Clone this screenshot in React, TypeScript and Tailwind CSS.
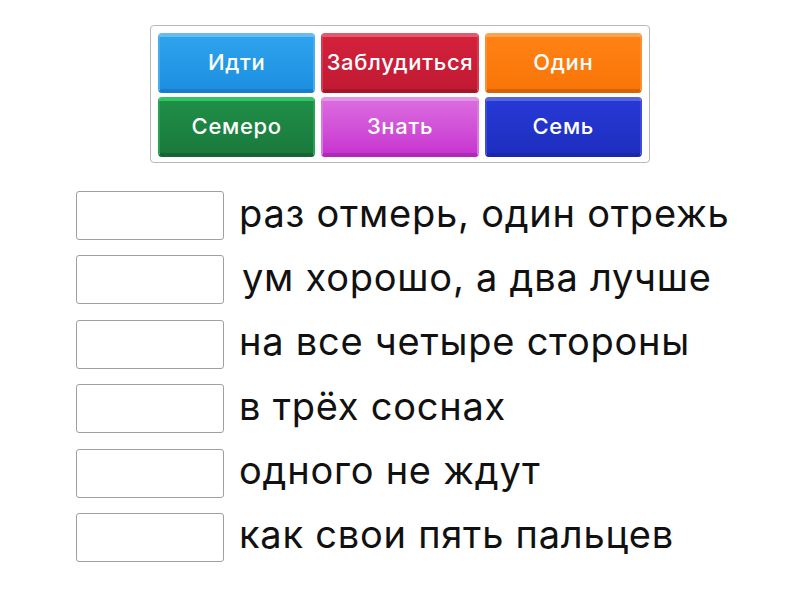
import React from "react";

const tiles = [
  { label: "Идти", face: "bg-gradient-to-b from-[#2ea3ec] to-[#1c8fe0]", edge: "border-t-[#66bcf2] border-x-[#46aeee] border-b-[#187ec9]" },
  { label: "Заблудиться", face: "bg-gradient-to-b from-[#d4213c] to-[#c21a33]", edge: "border-t-[#e05a6c] border-x-[#d83b50] border-b-[#a5162b]" },
  { label: "Один", face: "bg-gradient-to-b from-[#ff8114] to-[#f87607]", edge: "border-t-[#ffa24f] border-x-[#ff8f2e] border-b-[#d86307]" },
  { label: "Семеро", face: "bg-gradient-to-b from-[#1f8e47] to-[#1a7a3d]", edge: "border-t-[#2fc763] border-x-[#25a352] border-b-[#156633]" },
  { label: "Знать", face: "bg-gradient-to-b from-[#da6bde] to-[#c834d1]", edge: "border-t-[#e494e8] border-x-[#d97adf] border-b-[#b02ab9]" },
  { label: "Семь", face: "bg-gradient-to-b from-[#2639d5] to-[#1e2ebf]", edge: "border-t-[#5565e2] border-x-[#3b4cdb] border-b-[#1a27a6]" },
];

const phrases = [
  { text: "раз отмерь, один отрежь", pad: "pl-0" },
  { text: "ум хорошо, а два лучше", pad: "pl-[3px]" },
  { text: "на все четыре стороны", pad: "pl-0" },
  { text: "в трёх соснах", pad: "pl-0" },
  { text: "одного не ждут", pad: "pl-0" },
  { text: "как свои пять пальцев", pad: "pl-0" },
];

export default function App() {
  return (
    <div
      className="w-[800px] h-[600px] bg-white"
      style={{ fontFamily: "Inter, 'Noto Sans', sans-serif" }}
    >
      <div className="pt-[25px] pl-[150px]">
        {/* word bank */}
        <div className="w-[500px] h-[138px] border border-[#b8b8b8] rounded-[4px] px-[7px] pt-[7px] grid grid-cols-3 gap-x-[6px] gap-y-[4px] content-start">
          {tiles.map((t) => (
            <div
              key={t.label}
              className={`h-[60px] pb-[2px] rounded-[4px] border-t-[4px] border-x-[2px] border-b-[4px] flex items-center justify-center text-white text-[22px] tracking-[0.03em] font-medium ${t.face} ${t.edge}`}
            >
              {t.label}
            </div>
          ))}
        </div>
      </div>

      {/* answer rows */}
      <div className="pl-[76px] pt-[28px] flex flex-col gap-[15.4px]">
        {phrases.map((p) => (
          <div key={p.text} className="flex items-center h-[49px]">
            <div className="w-[148px] h-[49px] border border-[#a0a0a0] rounded-[3px] bg-white shrink-0" />
            <div className={`ml-[15px] pb-[6px] text-[38px] tracking-[0.02em] text-[#111] leading-none ${p.pad}`}>
              {p.text}
            </div>
          </div>
        ))}
      </div>
    </div>
  );
}
